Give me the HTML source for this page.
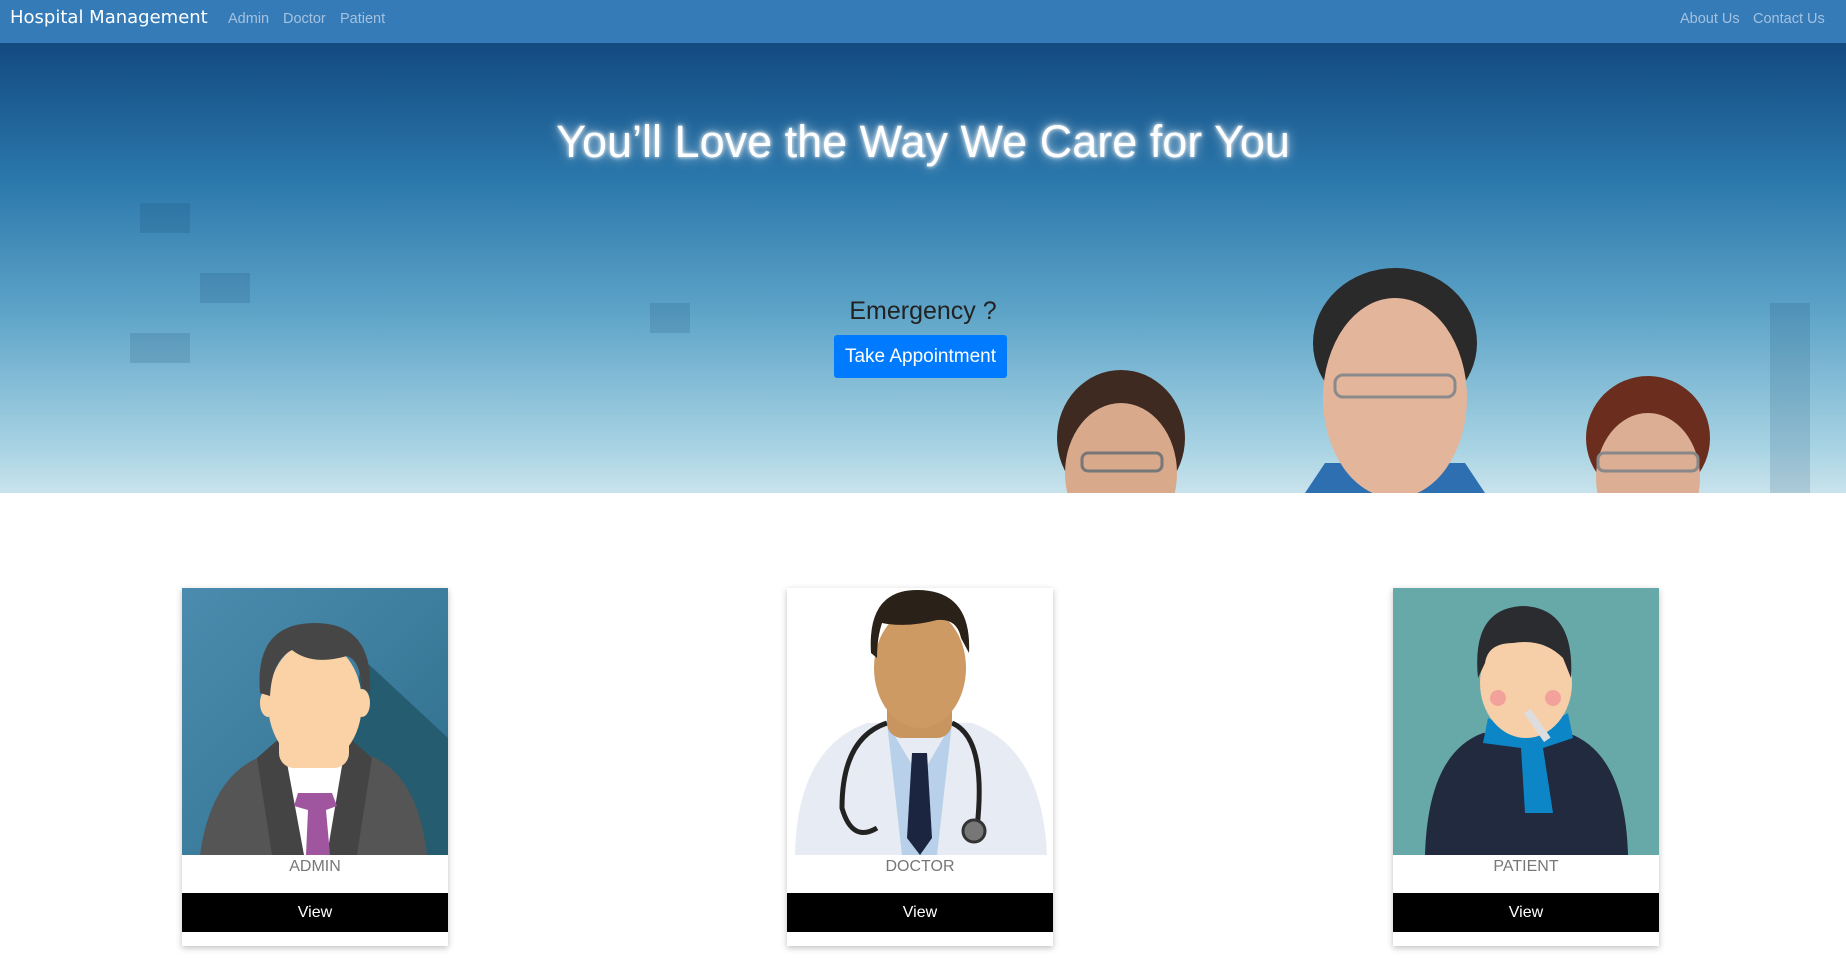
<!DOCTYPE html>
<html><head><meta charset="utf-8"><style>
*{margin:0;padding:0;box-sizing:border-box}
body{width:1846px;height:958px;overflow:hidden;background:#fff;font-family:"Liberation Sans",sans-serif;position:relative}
.nav{position:absolute;left:0;top:0;width:1846px;height:43px;background:#357bb8}
.nav span{position:absolute;top:11px;font-size:14.5px;color:#a4c2df}
.brand{position:absolute;left:10px;top:7px;font-size:18px;color:#fff;font-family:"DejaVu Sans",sans-serif}
.hero{position:absolute;left:0;top:43px;width:1846px;height:450px;background:linear-gradient(180deg,#134a80 0%,#2a77ab 30%,#5ea4c8 60%,#a8d3e3 90%,#c9e3ec 100%);overflow:hidden}
h1{position:absolute;top:73px;left:0;width:1846px;text-align:center;font-weight:normal;font-size:45px;color:#fff;text-shadow:0 0 12px rgba(255,255,255,.8),0 0 4px #fff}
.em{position:absolute;top:254px;left:0;width:1846px;text-align:center;font-size:25px;color:#222}
.btn{position:absolute;left:834px;top:292px;width:173px;height:43px;background:#007bff;color:#fff;font-size:19px;text-align:center;line-height:43px;border-radius:3px}
.card{position:absolute;top:588px;width:266px;height:358px;background:#fff;box-shadow:0 2px 6px rgba(0,0,0,.25)}
.card svg{display:block}
.lbl{position:absolute;top:270px;width:100%;text-align:center;color:#777;font-size:16px}
.view{position:absolute;top:305px;left:0;width:100%;height:39px;background:#000;color:#fff;text-align:center;line-height:39px;font-size:16px}
</style></head><body>
<div class="nav"><div class="brand">Hospital Management</div>
<span style="left:228px">Admin</span><span style="left:283px">Doctor</span><span style="left:340px">Patient</span>
<span style="left:1680px">About Us</span><span style="left:1753px">Contact Us</span></div>
<div class="hero">
<svg width="1846" height="450" style="position:absolute;left:0;top:0">
<g opacity=".15" fill="#0d3a66"><rect x="140" y="160" width="50" height="30"/><rect x="200" y="230" width="50" height="30"/><rect x="130" y="290" width="60" height="30"/><rect x="650" y="260" width="40" height="30"/><rect x="1770" y="260" width="40" height="190"/></g>
<g><ellipse cx="1121" cy="395" rx="64" ry="68" fill="#3e2a20"/><ellipse cx="1121" cy="430" rx="56" ry="70" fill="#d9a98c"/><rect x="1082" y="410" width="80" height="18" rx="6" fill="none" stroke="#777" stroke-width="3"/></g>
<g><path d="M1305 450 L1325 420 L1465 420 L1485 450Z" fill="#2d6fb0"/><ellipse cx="1395" cy="300" rx="82" ry="75" fill="#2a2a2a"/><ellipse cx="1395" cy="355" rx="72" ry="100" fill="#e3b69c"/><rect x="1335" y="332" width="120" height="22" rx="8" fill="none" stroke="#8a8a8a" stroke-width="3"/></g>
<g><ellipse cx="1648" cy="395" rx="62" ry="62" fill="#6b2e1e"/><ellipse cx="1648" cy="435" rx="52" ry="65" fill="#dcae94"/><rect x="1598" y="410" width="100" height="18" rx="6" fill="none" stroke="#888" stroke-width="3"/></g>
</svg>
<h1>You’ll Love the Way We Care for You</h1>
<div class="em">Emergency ?</div>
<div class="btn">Take Appointment</div>
</div>

<div class="card" style="left:182px">
<svg width="266" height="267"><defs><linearGradient id="a" x1="0" y1="0" x2="1" y2="1"><stop offset="0" stop-color="#4b8cae"/><stop offset="1" stop-color="#2f6e8c"/></linearGradient></defs>
<rect width="266" height="267" fill="url(#a)"/><path d="M180 70 L266 150 L266 267 L150 267Z" fill="#255c70"/>
<path d="M18 267 Q30 180 90 165 L180 165 Q235 180 245 267Z" fill="#555"/>
<path d="M75 170 L100 148 L165 148 L190 170 L175 267 L90 267Z" fill="#444"/>
<path d="M100 148 L133 180 L165 148 L145 267 L122 267Z" fill="#fff"/>
<path d="M116 205 L150 205 L155 218 L144 222 L148 267 L124 267 L126 222 L112 218Z" fill="#a0559f"/>
<rect x="97" y="130" width="70" height="50" rx="15" fill="#fbd1a6"/>
<ellipse cx="133" cy="115" rx="47" ry="62" fill="#fbd1a6"/>
<ellipse cx="86" cy="115" rx="8" ry="14" fill="#fbd1a6"/><ellipse cx="180" cy="115" rx="8" ry="14" fill="#fbd1a6"/>
<path d="M78 105 Q72 35 133 35 Q192 35 188 105 L180 100 Q178 72 165 68 Q130 78 110 62 Q90 72 88 108Z" fill="#464646"/>
</svg>
<div class="lbl">ADMIN</div><div class="view">View</div></div>

<div class="card" style="left:787px">
<svg width="266" height="267"><rect width="266" height="267" fill="#fff"/>
<path d="M8 267 Q10 160 80 135 L185 135 Q255 160 260 267Z" fill="#e7ebf3"/>
<path d="M100 135 L133 190 L165 135 L150 267 L115 267Z" fill="#b8d0ea"/>
<path d="M125 165 L140 165 L145 250 L133 267 L120 250Z" fill="#1c2540"/>
<path d="M100 135 Q55 150 55 220 Q65 255 90 240" stroke="#222" stroke-width="5" fill="none"/>
<path d="M165 135 Q200 150 190 240" stroke="#222" stroke-width="5" fill="none"/>
<circle cx="187" cy="243" r="11" fill="#777" stroke="#333" stroke-width="3"/>
<rect x="100" y="105" width="65" height="45" rx="15" fill="#c8955f"/>
<ellipse cx="133" cy="80" rx="46" ry="60" fill="#cc9a62"/>
<path d="M84 65 Q80 2 130 2 Q185 2 182 65 L174 50 Q170 30 150 32 Q120 40 95 35 Q90 50 90 70Z" fill="#2a2118"/>
</svg>
<div class="lbl">DOCTOR</div><div class="view">View</div></div>

<div class="card" style="left:1393px">
<svg width="266" height="267"><rect width="266" height="267" fill="#67a8a8"/>
<path d="M32 267 Q35 165 90 145 L175 145 Q232 165 235 267Z" fill="#222a40"/>
<path d="M95 130 Q133 150 175 125 L180 150 L150 160 L160 225 L132 225 L128 160 L90 155Z" fill="#0d86c8"/>
<ellipse cx="133" cy="95" rx="46" ry="55" fill="#f6cfa8"/>
<circle cx="105" cy="110" r="8" fill="#f2a29a"/><circle cx="160" cy="110" r="8" fill="#f2a29a"/>
<path d="M85 90 Q78 20 130 18 Q182 20 178 90 L170 70 Q150 50 120 55 Q95 55 92 75Z" fill="#2a2c30"/>
<rect x="140" y="120" width="8" height="35" fill="#ddd" transform="rotate(-35 144 137)"/>
</svg>
<div class="lbl">PATIENT</div><div class="view">View</div></div>
</body></html>
